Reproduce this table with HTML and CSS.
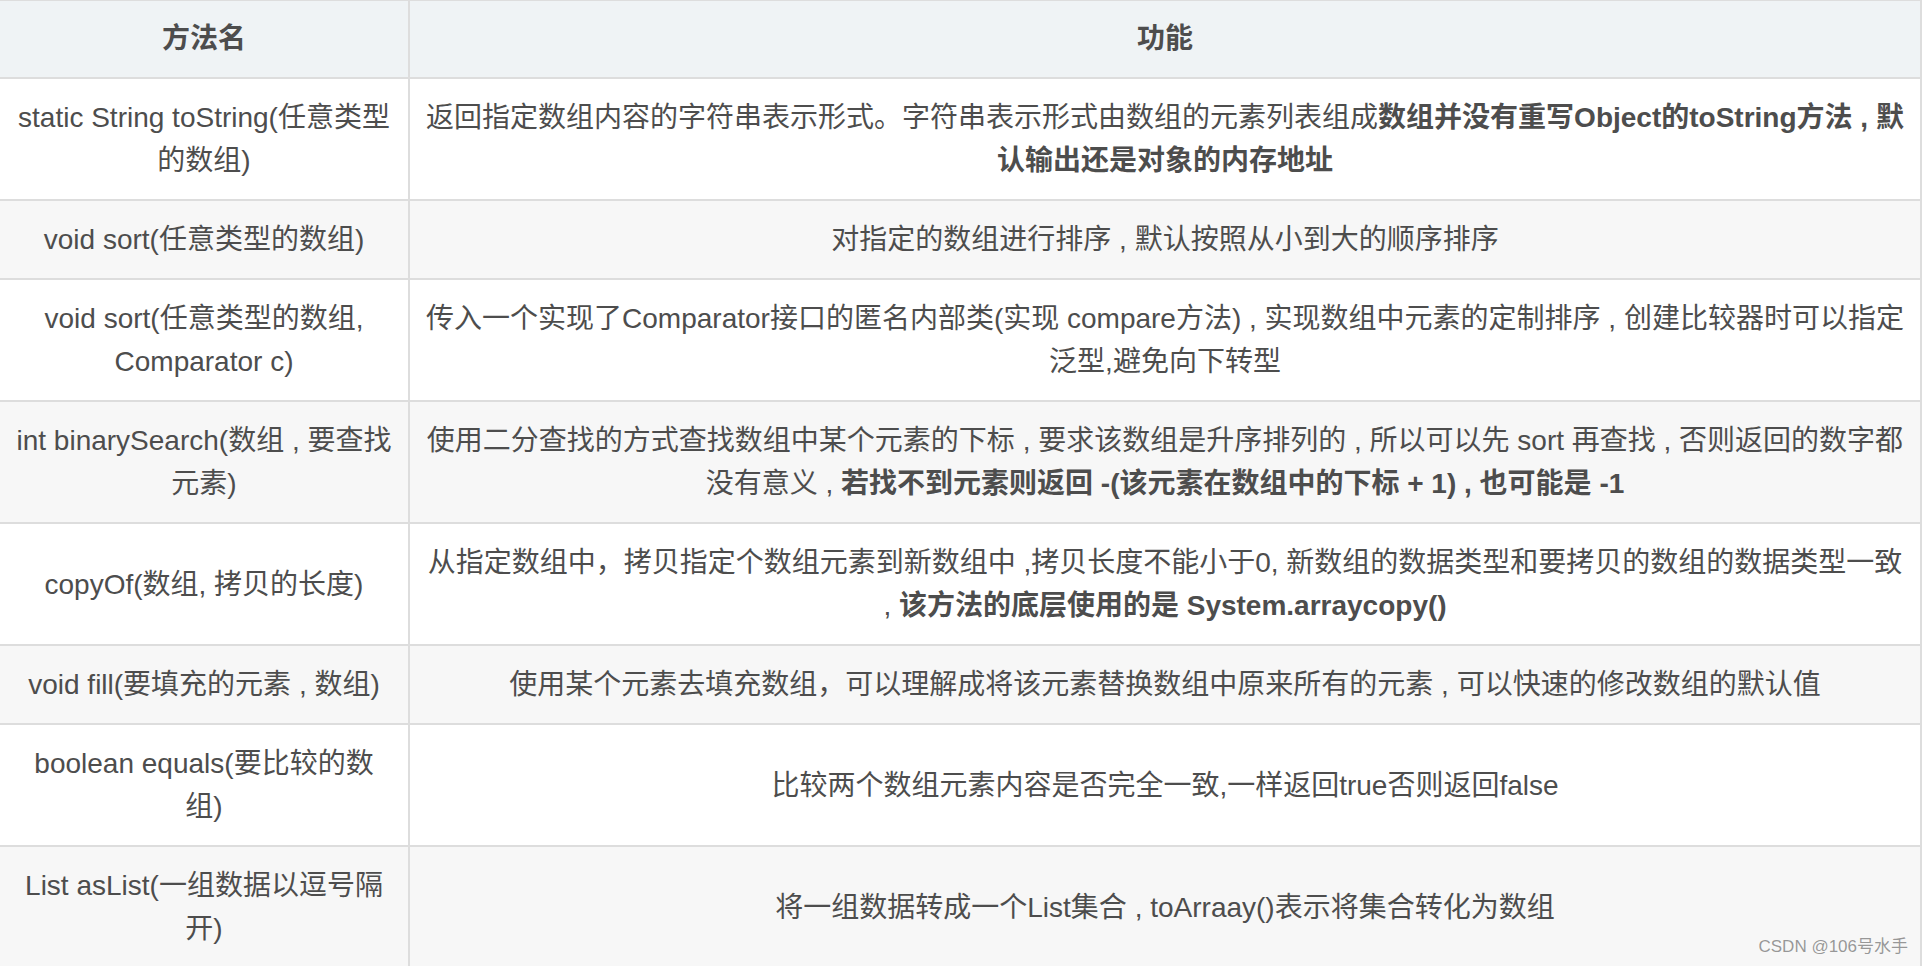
FILE: index.html
```html
<!DOCTYPE html>
<html lang="zh-CN">
<head>
<meta charset="utf-8">
<title>Arrays 方法</title>
<link rel="stylesheet" href="styles.css">
</head>
<body>
<div class="page">
  <table class="methods">
    <colgroup>
      <col class="col-name">
      <col class="col-desc">
    </colgroup>
    <thead>
      <tr>
        <th>方法名</th>
        <th>功能</th>
      </tr>
    </thead>
    <tbody>
      <tr>
        <td class="name">static String toString(任意类型的数组)</td>
        <td class="desc">返回指定数组内容的字符串表示形式。字符串表示形式由数组的元素列表组成<strong>数组并没有重写Object的toString方法 , 默认输出还是对象的内存地址</strong></td>
      </tr>
      <tr>
        <td class="name">void sort(任意类型的数组)</td>
        <td class="desc">对指定的数组进行排序 , 默认按照从小到大的顺序排序</td>
      </tr>
      <tr>
        <td class="name">void sort(任意类型的数组, Comparator c)</td>
        <td class="desc">传入一个实现了Comparator接口的匿名内部类(实现 compare方法) , 实现数组中元素的定制排序 , 创建比较器时可以指定泛型,避免向下转型</td>
      </tr>
      <tr>
        <td class="name">int binarySearch(数组 , 要查找元素)</td>
        <td class="desc">使用二分查找的方式查找数组中某个元素的下标 , 要求该数组是升序排列的 , 所以可以先 sort 再查找 , 否则返回的数字都没有意义 , <strong>若找不到元素则返回 -(该元素在数组中的下标 + 1) , 也可能是 -1</strong></td>
      </tr>
      <tr>
        <td class="name">copyOf(数组, 拷贝的长度)</td>
        <td class="desc">从指定数组中，拷贝指定个数组元素到新数组中 ,拷贝长度不能小于0, 新数组的数据类型和要拷贝的数组的数据类型一致 , <strong>该方法的底层使用的是 System.arraycopy()</strong></td>
      </tr>
      <tr>
        <td class="name">void fill(要填充的元素 , 数组)</td>
        <td class="desc">使用某个元素去填充数组，可以理解成将该元素替换数组中原来所有的元素 , 可以快速的修改数组的默认值</td>
      </tr>
      <tr>
        <td class="name">boolean equals(要比较的数组)</td>
        <td class="desc">比较两个数组元素内容是否完全一致,一样返回true否则返回false</td>
      </tr>
      <tr>
        <td class="name">List asList(一组数据以逗号隔开)</td>
        <td class="desc">将一组数据转成一个List集合 , toArraay()表示将集合转化为数组</td>
      </tr>
    </tbody>
  </table>
  <div class="watermark">CSDN @106号水手</div>
</div>
</body>
</html>
```

FILE: styles.css
```css
html, body {
  margin: 0;
  padding: 0;
  background: #ffffff;
}

.page {
  position: relative;
  width: 1922px;
  height: 966px;
  overflow: hidden;
}

.methods {
  width: 1922px;
  table-layout: fixed;
  border-collapse: separate;
  border-spacing: 0;
  border-top: 1px solid #dddddd;
  font-family: "Liberation Sans", "Noto Sans CJK SC", sans-serif;
  font-size: 28px;
  color: #4d4d4d;
}

.col-name {
  width: 410px;
}

.methods th,
.methods td {
  text-align: center;
  vertical-align: middle;
  border-right: 2px solid #dddddd;
  border-bottom: 2px solid #dddddd;
  word-wrap: break-word;
}

.methods th {
  padding: 16px 13px;
  line-height: 44px;
  background: #eff3f5;
  font-weight: bold;
}

.methods td {
  line-height: 43px;
  padding: 17px 13px;
}

.methods td.name {
  padding-left: 16.5px;
  padding-right: 16.5px;
}

.methods tbody tr:nth-child(odd) td {
  background: #ffffff;
}

.methods tbody tr:nth-child(even) td {
  background: #f7f7f7;
}

.methods strong {
  font-weight: bold;
}

.watermark {
  position: absolute;
  right: 14px;
  bottom: 9px;
  font-family: "Liberation Sans", "Noto Sans CJK SC", sans-serif;
  font-size: 17px;
  line-height: 20px;
  color: rgba(120, 120, 120, 0.75);
}
```
